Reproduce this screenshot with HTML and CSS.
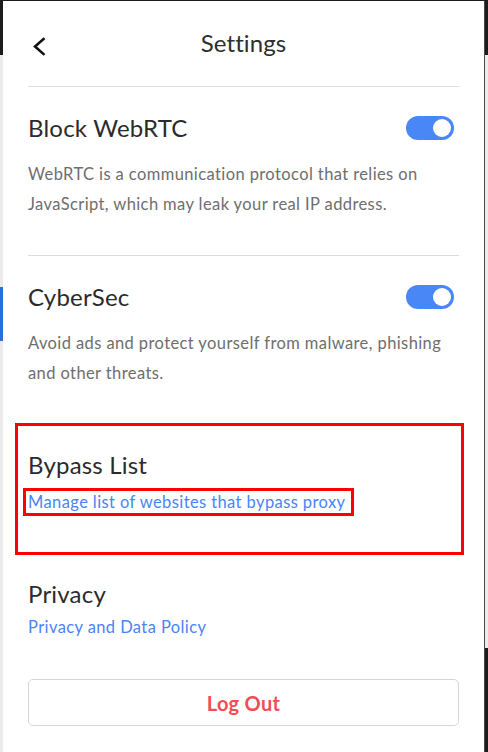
FILE: index.html
```html
<!DOCTYPE html>
<html lang="en">
<head>
<meta charset="utf-8">
<title>Settings</title>
<link rel="stylesheet" href="styles.css">
</head>
<body>
<div class="backdrop">
  <div class="side-tab"></div>
  <main class="panel">
    <header class="header">
      <svg class="back" width="14" height="19" viewBox="0 0 14 19" aria-hidden="true">
        <path d="M11.5 2 L3 9.5 L11.5 17" fill="none" stroke="#111" stroke-width="2.6" stroke-linecap="square" stroke-linejoin="miter"/>
      </svg>
      <h1 class="title">Settings</h1>
      <span class="spacer"></span>
    </header>
    <hr class="divider">

    <section class="setting first">
      <div class="row">
        <h2 class="setting-title">Block WebRTC</h2>
        <span class="toggle"><span class="knob"></span></span>
      </div>
      <p class="desc">WebRTC is a communication protocol that relies on JavaScript, which may leak your real IP address.</p>
    </section>
    <hr class="divider gap-top">

    <section class="setting">
      <div class="row">
        <h2 class="setting-title">CyberSec</h2>
        <span class="toggle"><span class="knob"></span></span>
      </div>
      <p class="desc">Avoid ads and protect yourself from malware, phishing and other threats.</p>
    </section>

    <section class="bypass">
      <h2 class="setting-title">Bypass List</h2>
      <a class="link boxed" href="#">Manage list of websites that bypass proxy</a>
    </section>

    <section class="privacy">
      <h2 class="setting-title">Privacy</h2>
      <a class="link" href="#">Privacy and Data Policy</a>
    </section>

    <button class="logout" type="button">Log Out</button>
  </main>
</div>
</body>
</html>
```

FILE: styles.css
```css
* { box-sizing: border-box; }

html, body {
  margin: 0;
  padding: 0;
  height: 100%;
}

body {
  font-family: "Lato", "Noto Sans", sans-serif;
  background: #ebebeb;
  overflow: hidden;
}

.backdrop {
  position: relative;
  width: 488px;
  height: 752px;
  background:
    linear-gradient(#1c1c1c, #1c1c1c) 0 0 / 100% 55px no-repeat,
    linear-gradient(#1c1c1c, #1c1c1c) 485px 648px / 3px 104px no-repeat,
    #ebebeb;
  padding-top: 1px;
  padding-left: 3px;
}

.side-tab {
  position: absolute;
  left: 0;
  top: 287px;
  width: 3px;
  height: 54px;
  background: #2a6fd8;
}

.panel {
  width: 482px;
  height: 751px;
  background: #fff;
  border-right: 1px solid #4a4a4a;
  padding: 0 25px 0 25px;
  display: flex;
  flex-direction: column;
}

.header {
  height: 85px;
  display: grid;
  grid-template-columns: 1fr auto 1fr;
  align-items: center;
}

.back {
  margin-left: 4px;
  margin-top: 6px;
  display: block;
}

.title {
  margin: 0 0 2px;
  font-size: 24px;
  line-height: 30px;
  font-weight: 400;
  color: #2e2e2e;
  letter-spacing: 0.1px;
}

.divider {
  margin: 0;
  border: 0;
  height: 1px;
  background: #dcdcdc;
  flex: none;
}

.gap-top { margin-top: 36px; }

.setting { padding-top: 26px; }

.row {
  display: flex;
  align-items: center;
  justify-content: space-between;
  height: 30px;
}

.setting-title {
  margin: 0;
  font-size: 24px;
  line-height: 30px;
  font-weight: 400;
  color: #2b2b2b;
  letter-spacing: 0.2px;
}

.toggle {
  width: 48px;
  height: 24px;
  border-radius: 12px;
  background: #4a87f6;
  margin-right: 5px;
  display: flex;
  align-items: center;
  justify-content: flex-end;
  padding-right: 3px;
}

.knob {
  width: 18px;
  height: 18px;
  border-radius: 50%;
  background: #fff;
}

.desc {
  margin: 16px 0 0;
  font-size: 16.5px;
  line-height: 30px;
  letter-spacing: 0.4px;
  color: #6e6e6e;
}

.bypass {
  margin: 35px -5px 0 -13px;
  border: 3px solid #ff0000;
  padding: 24px 2px 36px 10px;
  display: flex;
  flex-direction: column;
  align-items: flex-start;
}

.link {
  font-size: 16.5px;
  line-height: 22px;
  letter-spacing: 0.4px;
  color: #4a84f5;
  text-decoration: none;
}

.boxed {
  margin-top: 8px;
  margin-left: -5px;
  border: 3px solid #ff0000;
  padding: 0 6px 0 2px;
}

.privacy {
  margin-top: 24px;
  display: flex;
  flex-direction: column;
  align-items: flex-start;
}

.privacy .link { margin-top: 7px; }

.logout {
  margin-top: 41px;
  height: 47px;
  width: 100%;
  background: #fff;
  border: 1px solid #d6d6d6;
  border-radius: 5px;
  font-family: "Lato", "Noto Sans", sans-serif;
  font-size: 20px;
  font-weight: 700;
  color: #f24c55;
  letter-spacing: 0.3px;
  cursor: pointer;
}
```
